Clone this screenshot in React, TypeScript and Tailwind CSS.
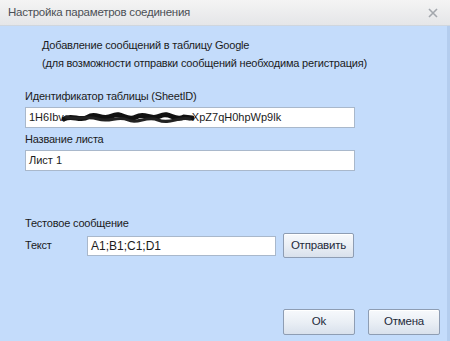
import React from "react";

const font = { fontFamily: '"Liberation Sans", Arial, sans-serif' };

function Btn({ children, className = "" }: { children: React.ReactNode; className?: string }) {
  return (
    <div
      className={
        "flex items-center justify-center rounded-[2px] border border-[#8e9db3] bg-gradient-to-b from-[#f7f9fc] via-[#eaeff5] to-[#d9e1ec] text-[11.5px] tracking-[-0.2px] text-[#1e2a3a] shadow-[inset_0_1px_0_#ffffff] " +
        className
      }
    >
      {children}
    </div>
  );
}

function Scribble() {
  return (
    <svg width="132" height="12" viewBox="0 0 132 12" className="mx-[-2px]">
      <path
        d="M2 7 C10 2, 18 10, 26 5 S40 9, 50 4 S64 10, 74 5 S88 9, 98 4 S112 10, 122 5 L130 6"
        stroke="#111"
        strokeWidth="5"
        fill="none"
        strokeLinecap="round"
      />
      <path
        d="M4 5 C14 9, 24 3, 36 7 S56 3, 66 8 S84 3, 96 8 S116 4, 128 7"
        stroke="#222"
        strokeWidth="3"
        fill="none"
        strokeLinecap="round"
      />
    </svg>
  );
}

export default function App() {
  return (
    <div className="flex h-[341px] w-[450px] flex-col overflow-hidden bg-[#c4dcfb]" style={font}>
      <div className="flex h-[26px] shrink-0 items-center justify-between border-b border-[#cfd6de] bg-gradient-to-b from-[#f4f4f4] to-[#e5e6e8] pl-[8px] pr-[12px]">
        <span className="text-[11.5px] tracking-[-0.25px] text-[#4b4f55]">Настройка параметров соединения</span>
        <svg width="10" height="10" viewBox="0 0 10 10">
          <path d="M1 1 L9 9 M9 1 L1 9" stroke="#a3a7ad" strokeWidth="1.6" />
        </svg>
      </div>
      <div className="flex flex-1 flex-col border-r-[3px] border-[#b4cdee] text-[11px] tracking-[-0.2px] text-[#1b1b1b]">
        <div className="flex flex-col px-[25px]">
          <div className="mt-[10px] pl-[17px] leading-[18px]">Добавление сообщений в таблицу Google</div>
          <div className="pl-[17px] leading-[18px]">(для возможности отправки сообщений необходима регистрация)</div>
          <div className="mt-[15px] leading-[18px]">Идентификатор таблицы (SheetID)</div>
          <div className="mt-[2px] flex h-[21px] w-[330px] items-center border border-[#a9b8cb] bg-white pl-[3px] tracking-normal">
            <span>1H6Ibv</span>
            <Scribble />
            <span>XpZ7qH0hpWp9lk</span>
          </div>
          <div className="mt-[1px] leading-[20px]">Название листа</div>
          <div className="mt-[1px] flex h-[21px] w-[330px] items-center border border-[#a9b8cb] bg-white pl-[3px] tracking-normal">
            Лист 1
          </div>
          <div className="mt-[43px] leading-[18px]">Тестовое сообщение</div>
          <div className="mt-[1px] flex items-start">
            <div className="w-[62px] pt-[4px] leading-[16px]">Текст</div>
            <div className="mt-[3px] flex h-[20px] w-[189px] items-center border border-[#a9b8cb] bg-white pl-[3px] text-[12px] tracking-normal">
              A1;B1;C1;D1
            </div>
            <Btn className="ml-[7px] h-[25px] w-[71px]">Отправить</Btn>
          </div>
        </div>
        <div className="flex flex-1 items-end justify-end gap-[13px] pb-[6px] pr-[7px]">
          <Btn className="h-[26px] w-[72px]">Ok</Btn>
          <Btn className="h-[26px] w-[72px]">Отмена</Btn>
        </div>
      </div>
    </div>
  );
}
